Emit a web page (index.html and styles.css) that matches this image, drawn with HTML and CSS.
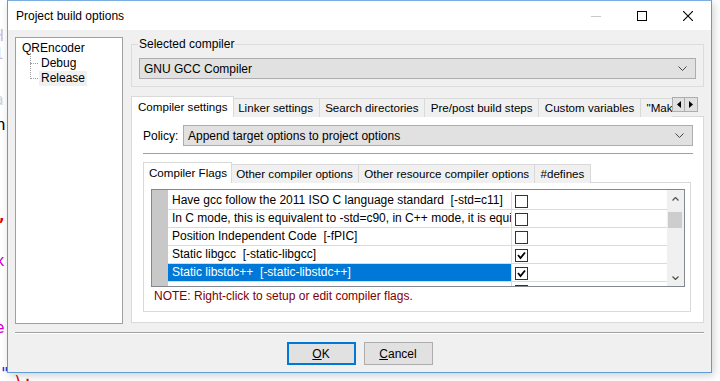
FILE: index.html
```html
<!DOCTYPE html>
<html>
<head>
<meta charset="utf-8">
<link rel="stylesheet" href="styles.css">
</head>
<body>
<div class="editor">
  <span class="eg g1">H</span>
  <span class="eg g2">1</span>
  <span class="eg g3">a</span>
  <span class="eg g4">n</span>
  <span class="eg g5">,</span>
  <span class="eg g6">x</span>
  <span class="eg g7">e</span>
  <span class="eg g8">"</span>
  <span class="eg g9">);</span>
</div>
<div class="window">
  <div class="titlebar">
    <span class="title">Project build options</span>
    <div class="controls">
      <div class="ctl"><svg width="10" height="10" viewBox="0 0 10 10"><line x1="0" y1="5.5" x2="10" y2="5.5" stroke="#c8c8c8" stroke-width="1"/></svg></div>
      <div class="ctl"><svg width="10" height="10" viewBox="0 0 10 10"><rect x="0.5" y="0.5" width="9" height="9" fill="none" stroke="#000" stroke-width="1"/></svg></div>
      <div class="ctl"><svg width="10" height="10" viewBox="0 0 10 10"><path d="M0 0 L10 10 M10 0 L0 10" stroke="#000" stroke-width="1.1"/></svg></div>
    </div>
  </div>
  <div class="client">
    <div class="main">
      <div class="tree">
        <div class="tnode root">QREncoder</div>
        <div class="tchildren">
          <div class="tnode child"><span class="hline"></span><span class="tlabel">Debug</span></div>
          <div class="tnode child last"><span class="hline"></span><span class="tlabel sel">Release</span></div>
        </div>
      </div>
      <div class="right">
        <fieldset class="group">
          <legend>Selected compiler</legend>
          <div class="combo"><span>GNU GCC Compiler</span><svg class="chev" width="9" height="5" viewBox="0 0 9 5"><polyline points="0.5,0.5 4.5,4.5 8.5,0.5" fill="none" stroke="#444" stroke-width="1"/></svg></div>
        </fieldset>
        <div class="tabstrip">
          <div class="tabs">
            <div class="tab active">Compiler settings</div>
            <div class="tab">Linker settings</div>
            <div class="tab">Search directories</div>
            <div class="tab">Pre/post build steps</div>
            <div class="tab">Custom variables</div>
            <div class="tab">"Make" commands</div>
          </div>
          <div class="arrows">
            <div class="arr"><svg width="4" height="7" viewBox="0 0 4 7"><polygon points="4,0 0,3.5 4,7" fill="#000"/></svg></div>
            <div class="arr"><svg width="4" height="7" viewBox="0 0 4 7"><polygon points="0,0 4,3.5 0,7" fill="#000"/></svg></div>
          </div>
        </div>
        <div class="tabpanel">
          <div class="policy">
            <span class="plabel">Policy:</span>
            <div class="combo pcombo"><span>Append target options to project options</span><svg class="chev" width="9" height="5" viewBox="0 0 9 5"><polyline points="0.5,0.5 4.5,4.5 8.5,0.5" fill="none" stroke="#444" stroke-width="1"/></svg></div>
          </div>
          <div class="hsep"></div>
          <div class="itabs">
            <div class="itab active">Compiler Flags</div>
            <div class="itab">Other compiler options</div>
            <div class="itab">Other resource compiler options</div>
            <div class="itab">#defines</div>
          </div>
          <div class="ipanel">
            <div class="list">
              <div class="gutter"></div>
              <div class="rows">
                <div class="row"><div class="ctext">Have gcc follow the 2011 ISO C language standard&nbsp; [-std=c11]</div><div class="ccheck"><span class="cb"></span></div></div>
                <div class="row"><div class="ctext">In C mode, this is equivalent to -std=c90, in C++ mode, it is equivalent to -std=c++98</div><div class="ccheck"><span class="cb"></span></div></div>
                <div class="row"><div class="ctext">Position Independent Code&nbsp; [-fPIC]</div><div class="ccheck"><span class="cb"></span></div></div>
                <div class="row"><div class="ctext">Static libgcc&nbsp; [-static-libgcc]</div><div class="ccheck"><span class="cb on"><svg width="11" height="11" viewBox="0 0 11 11"><polyline points="2,5 4.5,8 9,2.5" fill="none" stroke="#000" stroke-width="1.8"/></svg></span></div></div>
                <div class="row selrow"><div class="ctext">Static libstdc++&nbsp; [-static-libstdc++]</div><div class="ccheck"><span class="cb on"><svg width="11" height="11" viewBox="0 0 11 11"><polyline points="2,5 4.5,8 9,2.5" fill="none" stroke="#000" stroke-width="1.8"/></svg></span></div></div>
                <div class="row"><div class="ctext"></div><div class="ccheck"><span class="cb"></span></div></div>
              </div>
              <div class="vscroll">
                <div class="sbtn"><svg width="7" height="4" viewBox="0 0 7 4"><polyline points="0.5,3.5 3.5,0.5 6.5,3.5" fill="none" stroke="#555" stroke-width="1.3"/></svg></div>
                <div class="strack"><div class="thumb"></div></div>
                <div class="sbtn"><svg width="7" height="4" viewBox="0 0 7 4"><polyline points="0.5,0.5 3.5,3.5 6.5,0.5" fill="none" stroke="#555" stroke-width="1.3"/></svg></div>
              </div>
            </div>
            <div class="note">NOTE: Right-click to setup or edit compiler flags.</div>
          </div>
        </div>
      </div>
    </div>
    <div class="bsep"></div>
    <div class="buttons">
      <div class="btn default"><u>O</u>K</div>
      <div class="btn"><u>C</u>ancel</div>
    </div>
  </div>
</div>
</body>
</html>
```
FILE: styles.css
```css
* { box-sizing: border-box; }
html, body { margin: 0; padding: 0; }
body {
  width: 720px; height: 381px; overflow: hidden;
  background: #ffffff;
  font-family: "Liberation Sans", Arial, sans-serif;
  font-size: 12px; color: #000;
  position: relative;
}
.editor { position: absolute; left: 0; top: 0; width: 720px; height: 381px; font-family: "DejaVu Sans Mono", monospace; font-size: 16px; }
.eg { position: absolute; line-height: 16px; }
.g1 { left: -6px; top: 28px; color: #c8c0e0; }
.g2 { left: -6px; top: 46px; color: #c8c0e0; }
.g3 { left: -6px; top: 92px; color: #d0d0e0; }
.g4 { left: -4px; top: 117px; color: #000; }
.g5 { left: -3px; top: 208px; color: #e00000; font-weight: bold; }
.g6 { left: -5px; top: 253px; color: #d000d0; }
.g7 { left: -5px; top: 320px; color: #d000d0; }
.g8 { left: 0px; top: 366px; color: #2030c0; }
.g9 { left: 13px; top: 374px; color: #e00000; }

.window {
  position: absolute; left: 7px; top: 0; width: 705px; height: 373px;
  border: 1px solid #5d9cd6; border-top-color: #7aaee0;
  background: #f0f0f0;
  box-shadow: 2px 3px 8px rgba(0,0,0,0.18);
  display: flex; flex-direction: column;
}
.titlebar {
  height: 29px; background: #ffffff;
  display: flex; align-items: center; justify-content: space-between;
  flex: none;
}
.title { padding-left: 8px; font-size: 12px; padding-top: 1px; }
.controls { display: flex; height: 29px; }
.ctl { width: 46px; height: 29px; display: flex; align-items: center; justify-content: center; }

.client { flex: 1; padding: 7px 7px 6px 7px; display: flex; flex-direction: column; }
.main { display: flex; gap: 8px; height: 287px; }
.tree {
  width: 108px; height: 287px; background: #fff; border: 1px solid #a0a0a0;
  padding: 3px 0 0 6px; font-size: 12px;
}
.tnode { height: 15px; line-height: 15px; white-space: nowrap; }
.tchildren { position: relative; margin-left: 8px; }
.tchildren::before {
  content: ""; position: absolute; left: 0; top: -3px; height: 26px;
  border-left: 1px dotted #a0a0a0;
}
.child { display: flex; align-items: center; }
.hline { width: 8px; border-top: 1px dotted #a0a0a0; margin-right: 1px; }
.tlabel { padding: 0 2px; }
.tlabel.sel { background: #f0f0f0; }

.right { width: 573px; display: flex; flex-direction: column; }
.group {
  margin: 0; padding: 0 7px 6px 7px; height: 50px;
  border: 1px solid #dcdcdc;
}
.group legend { padding: 0 1px; margin-left: -1px; line-height: 14px; font-size: 12px; }
.combo {
  height: 21px; background: #e1e1e1; border: 1px solid #adadad;
  display: flex; align-items: center; justify-content: space-between;
  padding: 0 8px 0 4px; margin-top: 7px;
}
.chev { flex: none; }

.tabstrip { margin-top: 9px; height: 20px; display: flex; align-items: flex-start; position: relative; z-index: 1; }
.tabs { width: 541px; display: flex; align-items: flex-end; overflow: hidden; height: 21px; padding-left: 1px; }
.tab {
  flex: none; height: 19px; line-height: 18px; padding: 0 5.6px;
  border: 1px solid #d9d9d9; border-bottom: none; margin-left: -1px;
  background: #f0f0f0; white-space: nowrap; font-size: 11.6px;
}
.tab.active {
  height: 21px; background: #fff; padding: 0 5px 0 6px; line-height: 20px;
  margin-left: -1px; margin-right: -1px; position: relative; z-index: 2;
}
.arrows { display: flex; margin-top: 1px; }
.arr {
  width: 13px; height: 15px; border: 1px solid #adadad; background: #e1e1e1;
  display: flex; align-items: center; justify-content: center;
}
.arr + .arr { border-left: none; }

.tabpanel {
  width: 573px; height: 207px; background: #fff; border: 1px solid #d9d9d9;
  padding: 8px 10px 9px 11px;
}
.policy { display: flex; align-items: center; }
.plabel { width: 40px; flex: none; }
.pcombo { flex: 1; margin-top: 0; }
.hsep { height: 2px; border-top: 1px solid #a0a0a0; border-bottom: 1px solid #fff; margin-top: 7px; }

.itabs { display: flex; align-items: flex-end; margin-top: 7px; height: 21px; }
.itab {
  flex: none; height: 19px; line-height: 18px; padding: 0 5.2px;
  border: 1px solid #d9d9d9; border-bottom: none; margin-left: -1px;
  background: #f0f0f0; white-space: nowrap; font-size: 11.6px;
}
.itab.active { height: 21px; line-height: 20px; background: #fff; padding: 0 4px 0 5px; margin-left: 0; margin-right: -1px; position: relative; z-index: 2; }
.ipanel {
  width: 548px; height: 130px; border: 1px solid #d9d9d9; background: #fff;
  margin-top: -1px; padding: 6px 6px 0 7px;
}
.list {
  width: 534px; height: 98px; border: 1px solid #828790; display: flex; overflow: hidden;
}
.gutter { width: 16px; background: #c8c8c8; flex: none; }
.rows { width: 499px; flex: none; padding-top: 2px; }
.row { display: flex; height: 18px; }
.ctext {
  width: 344px; flex: none; padding-left: 4px; line-height: 17px;
  white-space: nowrap; overflow: hidden;
  border-bottom: 1px solid #dadada; border-right: 1px solid #dadada;
}
.ccheck { width: 155px; flex: none; border-bottom: 1px solid #dadada; padding: 3px 0 0 3px; }
.cb { display: block; width: 13px; height: 13px; border: 1px solid #333; background: #fff; }
.cb svg { display: block; }
.selrow .ctext { background: #0078d7; color: #fff; }
.vscroll { width: 17px; flex: none; background: #f0f0f0; display: flex; flex-direction: column; }
.sbtn { height: 17px; display: flex; align-items: center; justify-content: center; flex: none; }
.strack { flex: 1; padding: 5px 2px 0 1px; }
.thumb { height: 16px; background: #cdcdcd; }
.note { color: #800000; margin-top: 2px; padding-left: 3px; line-height: 14px; }

.bsep { height: 2px; border-top: 1px solid #a0a0a0; border-bottom: 1px solid #fff; margin-top: 8px; flex: none; }
.buttons { display: flex; justify-content: center; gap: 8px; margin-top: 8px; }
.btn {
  width: 69px; height: 23px; background: #e1e1e1; border: 1px solid #adadad;
  display: flex; align-items: center; justify-content: center;
}
.btn.default { border: 2px solid #0078d7; }
```
